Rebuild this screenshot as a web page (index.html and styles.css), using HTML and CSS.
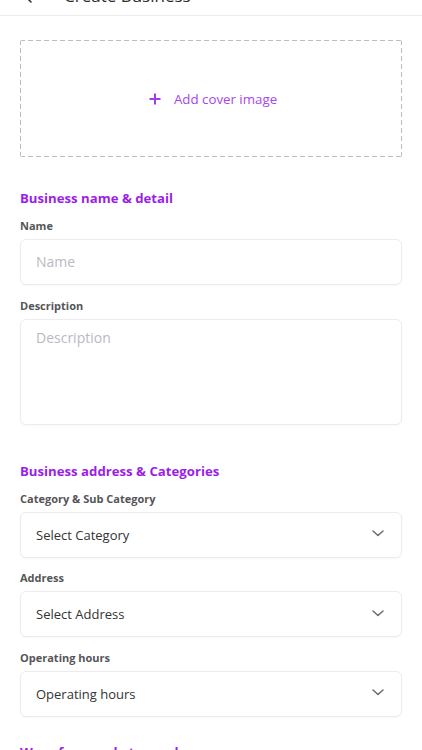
FILE: index.html
```html
<!DOCTYPE html>
<html lang="en">
<head>
<meta charset="utf-8">
<title>Create Business</title>
<link rel="stylesheet" href="styles.css">
</head>
<body>
<header class="app-header">
  <button class="back-btn" aria-label="Back">
    <svg width="8" height="14" viewBox="0 0 8 14"><path d="M7 1L1 7l6 6" fill="none" stroke="#333" stroke-width="1.6" stroke-linecap="round" stroke-linejoin="round"/></svg>
  </button>
  <h1 class="app-title">Create Business</h1>
</header>

<main class="form">
  <div class="cover">
    <svg class="plus" width="12" height="12" viewBox="0 0 12 12"><path d="M6 0.5v11M0.5 6h11" stroke="#a33de9" stroke-width="2"/></svg>
    <span class="cover-text">Add cover image</span>
  </div>

  <section class="section section-first">
    <h2 class="section-title">Business name &amp; detail</h2>
    <div class="field">
      <label class="label">Name</label>
      <div class="input"><span class="placeholder">Name</span></div>
    </div>
    <div class="field">
      <label class="label">Description</label>
      <div class="textarea"><span class="placeholder">Description</span></div>
    </div>
  </section>

  <section class="section section-second">
    <h2 class="section-title">Business address &amp; Categories</h2>
    <div class="field">
      <label class="label">Category &amp; Sub Category</label>
      <div class="select"><span class="value">Select Category</span>
        <svg class="chev" width="12" height="7" viewBox="0 0 12 7"><path d="M1 1l5 4.5L11 1" fill="none" stroke="#6b6b70" stroke-width="1.5" stroke-linecap="round" stroke-linejoin="round"/></svg>
      </div>
    </div>
    <div class="field">
      <label class="label">Address</label>
      <div class="select"><span class="value">Select Address</span>
        <svg class="chev" width="12" height="7" viewBox="0 0 12 7"><path d="M1 1l5 4.5L11 1" fill="none" stroke="#6b6b70" stroke-width="1.5" stroke-linecap="round" stroke-linejoin="round"/></svg>
      </div>
    </div>
    <div class="field">
      <label class="label">Operating hours</label>
      <div class="select"><span class="value">Operating hours</span>
        <svg class="chev" width="12" height="7" viewBox="0 0 12 7"><path d="M1 1l5 4.5L11 1" fill="none" stroke="#6b6b70" stroke-width="1.5" stroke-linecap="round" stroke-linejoin="round"/></svg>
      </div>
    </div>
  </section>

  <section class="section section-third">
    <h2 class="section-title">Ways for people to reach you</h2>
  </section>
</main>
</body>
</html>
```

FILE: styles.css
```css
* { box-sizing: border-box; }

html, body {
  margin: 0;
  padding: 0;
  background: #fff;
  font-family: "Open Sans", "Noto Sans", sans-serif;
  color: #333;
  overflow: hidden;
}

.app-header {
  height: 56px;
  margin-top: -40px;
  display: flex;
  align-items: flex-end;
  padding: 0 20px 9px 24px;
  border-bottom: 1px solid #ececec;
  background: #fff;
}

.back-btn {
  border: 0;
  background: none;
  padding: 0;
  margin: 0 32px 0 0;
  width: 8px;
  height: 20px;
  display: flex;
  align-items: center;
}

.app-title {
  margin: 0;
  font-size: 17px;
  line-height: 20px;
  font-weight: 400;
  color: #2b2b2b;
}

.form {
  padding: 24px 20px 0;
}

.cover {
  height: 117px;
  display: flex;
  align-items: center;
  justify-content: center;
  gap: 13px;
  border-radius: 2px;
  background:
    linear-gradient(to right, #bdbdbd 5px, transparent 5px) top left / 8px 1px repeat-x,
    linear-gradient(to right, #bdbdbd 5px, transparent 5px) bottom left / 8px 1px repeat-x,
    linear-gradient(to bottom, #bdbdbd 5px, transparent 5px) top left / 1px 8px repeat-y,
    linear-gradient(to bottom, #bdbdbd 5px, transparent 5px) top right / 1px 8px repeat-y;
  padding-left: 4px;
}

.plus { display: block; }

.cover-text {
  font-size: 13.3px;
  color: #a547ee;
  line-height: 18px;
}

.section-first { margin-top: 33px; }
.section-second { margin-top: 38px; }
.section-third { margin-top: 27px; }

.section-title {
  margin: 0 0 12px;
  font-size: 13.2px;
  line-height: 16px;
  font-weight: 700;
  color: #9b1de8;
}

.field + .field { margin-top: 12.5px; }

.label {
  display: block;
  font-size: 11px;
  line-height: 15px;
  font-weight: 700;
  color: #555558;
  margin-bottom: 6px;
}

.input,
.textarea,
.select {
  border: 1px solid #ececee;
  border-radius: 6px;
  background: #fff;
  box-shadow: 0 1px 2px rgba(0, 0, 0, 0.03);
}

.input {
  height: 46px;
  display: flex;
  align-items: center;
  padding: 0 15px;
}

.textarea {
  height: 106px;
  padding: 6px 15px;
}

.placeholder {
  font-size: 14px;
  line-height: 20px;
  color: #b9b9c2;
}

.select {
  height: 46px;
  display: flex;
  align-items: center;
  justify-content: space-between;
  padding: 0 17px 0 15px;
}

.value {
  font-size: 13px;
  line-height: 20px;
  color: #333;
}

.chev { display: block; margin-top: -2px; }
```
